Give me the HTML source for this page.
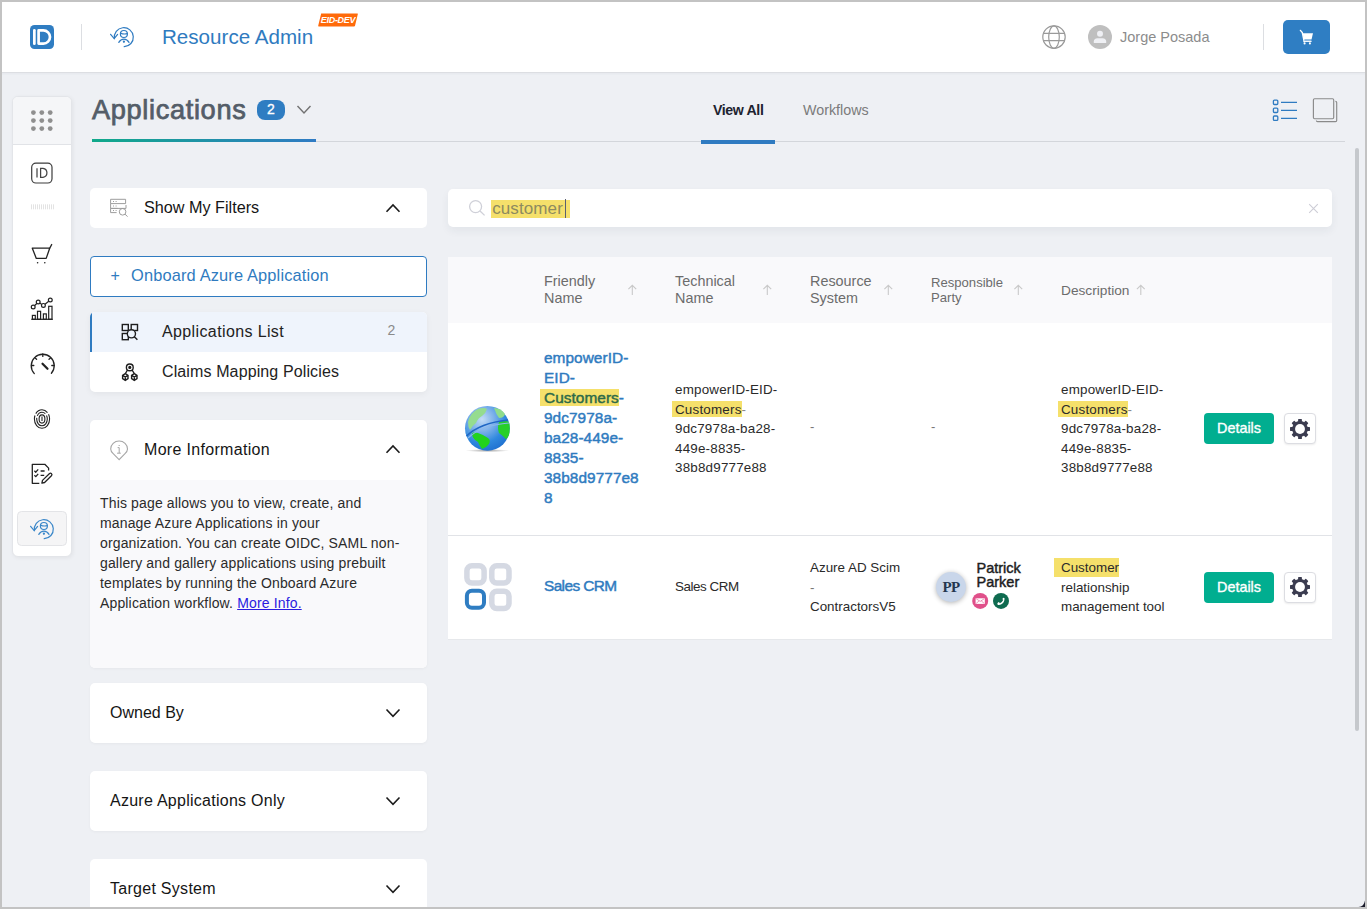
<!DOCTYPE html>
<html><head><meta charset="utf-8">
<style>
*{box-sizing:border-box;margin:0;padding:0}
html,body{width:1367px;height:909px;overflow:hidden;background:#eef0f4}
body{font-family:"Liberation Sans",sans-serif;position:relative}
.a{position:absolute}
svg.a{overflow:visible}
.card{position:absolute;background:#fff;border-radius:5px}
.t{position:absolute;white-space:nowrap}
.ln{position:absolute;white-space:nowrap}
.hl{background:#f5de6a}
</style></head>
<body>
<!-- ============ HEADER ============ -->
<div class="a" style="left:0;top:0;width:1367px;height:73px;background:#fff;border-bottom:1px solid #dcdee2;box-shadow:0 1px 2px rgba(60,70,90,.05)"></div>
<svg class="a" style="left:30px;top:25px" width="24" height="24" viewBox="0 0 24 24">
  <rect x="0" y="0" width="24" height="24" rx="4.5" fill="#2f7dc2"/>
  <rect x="3" y="4" width="2.7" height="16" rx="1.35" fill="#fff"/>
  <path d="M8.6 5.4 H13.4 A6.3 6.3 0 0 1 13.4 18.6 H8.6 Z" fill="none" stroke="#fff" stroke-width="2.7" stroke-linejoin="round"/>
</svg>
<div class="a" style="left:81px;top:24px;width:1px;height:26px;background:#dcdee2"></div>
<svg class="a" style="left:105px;top:20px" width="35" height="35" viewBox="0 0 35 35" fill="none" stroke="#2f7bc1" stroke-width="1.2" stroke-linecap="round">
  <path d="M19.2 26.7 A9.5 9.5 0 1 0 9.4 18.6"/>
  <path d="M5.6 14.3 L9.2 18.6 L12.6 14.4"/>
  <circle cx="18.9" cy="14" r="3.5"/>
  <path d="M15.6 13.2 Q19 14.6 22.3 13.6"/>
  <path d="M13.8 22.4 Q15.6 19.2 18.9 19.2 Q22.2 19.2 24 22.4"/>
  <circle cx="18.9" cy="21.7" r="0.5" fill="#2f7bc1"/>
</svg>
<div class="t" style="left:162px;top:25px;font-size:20.6px;line-height:24px;color:#2f7bbf">Resource Admin</div>
<svg class="a" style="left:318px;top:12.7px" width="40" height="14" viewBox="0 0 40 14">
  <path d="M3 0.5 H39.5 Q40 0.5 39.8 1.2 L37 12.8 Q36.8 13.5 36 13.5 H0.8 Q0 13.5 0.2 12.8 L3 1.2 Q3.2 0.5 3 0.5Z" fill="#ff6a0a"/>
  <text x="20" y="10.2" text-anchor="middle" font-family="Liberation Sans" font-size="9" font-weight="bold" font-style="italic" fill="#fff" letter-spacing="-0.3">EID-DEV</text>
</svg>

<svg class="a" style="left:1036px;top:18px" width="36" height="38" viewBox="0 0 36 38" fill="none" stroke="#9a9a9a" stroke-width="1.2">
  <circle cx="18" cy="19.1" r="11.2"/>
  <ellipse cx="18" cy="19.1" rx="5.3" ry="11.2"/>
  <path d="M7.4 15.4 H28.6 M7.4 22.6 H28.6"/>
</svg>
<svg class="a" style="left:1088px;top:25px" width="24" height="24" viewBox="0 0 24 24">
  <circle cx="12" cy="12" r="12" fill="#bfbfbf"/>
  <circle cx="12" cy="8.7" r="3" fill="#eff0f4"/>
  <path d="M5.8 17.9 V16.6 Q5.8 13.5 9.5 13.3 H14.5 Q18.2 13.5 18.2 16.6 V17.9Z" fill="#eff0f4"/>
</svg>
<div class="t" style="left:1120px;top:28px;font-size:14.5px;line-height:18px;color:#8c8c8c">Jorge Posada</div>
<div class="a" style="left:1263px;top:24px;width:1px;height:26px;background:#dcdee2"></div>
<div class="a" style="left:1283px;top:20px;width:47px;height:34px;background:#2f7ec3;border-radius:5px"></div>
<svg class="a" style="left:1280px;top:16px" width="56" height="42" viewBox="0 0 56 42">
  <path d="M20.4 14.4 L22.3 16.6 L24.2 25.6" fill="none" stroke="#fff" stroke-width="1.4" stroke-linecap="round"/>
  <path d="M22.6 17.2 H33 L31.5 23.6 H23.9Z" fill="#fff"/>
  <path d="M24 24.4 H31.3" stroke="#9cc2e6" stroke-width="0.8"/>
  <path d="M23.6 25.4 H31.6" stroke="#fff" stroke-width="1.1"/>
  <circle cx="24.6" cy="27.4" r="1.05" fill="#fff"/>
  <circle cx="29.9" cy="27.4" r="1.05" fill="#fff"/>
</svg>

<!-- ============ SIDEBAR ============ -->
<div class="card" style="left:12px;top:96px;width:60px;height:461px;border:1px solid #e3e5e9;border-radius:6px;overflow:hidden;box-shadow:1px 1px 4px rgba(0,0,0,.06)">
  <div class="a" style="left:0;top:0;width:58px;height:48px;background:#f5f6f8;border-bottom:1px solid #e1e3e7"></div>
</div>
<svg class="a" style="left:0;top:0" width="72" height="560" viewBox="0 0 72 560">
  <g fill="#8f8f8f">
    <circle cx="33.4" cy="112.6" r="2.4"/><circle cx="41.8" cy="112.6" r="2.4"/><circle cx="50.2" cy="112.6" r="2.4"/>
    <circle cx="33.4" cy="120.6" r="2.4"/><circle cx="41.8" cy="120.6" r="2.4"/><circle cx="50.2" cy="120.6" r="2.4"/>
    <circle cx="33.4" cy="128.6" r="2.4"/><circle cx="41.8" cy="128.6" r="2.4"/><circle cx="50.2" cy="128.6" r="2.4"/>
  </g>
  <!-- ID outline -->
  <rect x="31.7" y="163.1" width="20.3" height="19.9" rx="4.2" fill="none" stroke="#3c3c3c" stroke-width="1.2"/>
  <path d="M37 168.2 V177.5" stroke="#444" stroke-width="1.25"/>
  <path d="M40.6 168.3 H43 A4.6 4.6 0 0 1 43 177.4 H40.6Z" fill="none" stroke="#444" stroke-width="1.25"/>
  <!-- dashed -->
  <g stroke="#d0d0d0" stroke-width="0.6">
    <path d="M31.5 204.3 V209.3 M33.5 204.3 V209.3 M35.5 204.3 V209.3 M37.5 204.3 V209.3 M39.5 204.3 V209.3 M41.5 204.3 V209.3 M43.5 204.3 V209.3 M45.5 204.3 V209.3 M47.5 204.3 V209.3 M49.5 204.3 V209.3 M51.5 204.3 V209.3 M53.5 204.3 V209.3"/>
  </g>
  <!-- cart -->
  <g fill="none" stroke="#222" stroke-width="1.3" stroke-linejoin="round">
    <path d="M32.3 248.2 H49.7 L46.2 258.4 H36.3 Z"/>
    <path d="M49.7 248.2 L51.9 244.1"/>
  </g>
  <circle cx="37.6" cy="262.8" r="0.8" fill="#222"/><circle cx="44.8" cy="262.8" r="0.8" fill="#222"/>
  <!-- chart -->
  <g fill="none" stroke="#222" stroke-width="1.2">
    <path d="M31.3 319.3 H52.7"/>
    <rect x="32.4" y="315.4" width="2.9" height="3.9"/>
    <rect x="37.5" y="311.3" width="3.1" height="8"/>
    <rect x="43.4" y="313.9" width="2.9" height="5.4"/>
    <rect x="48.7" y="306.3" width="3.3" height="13"/>
    <path d="M33.2 307 L38.2 302 L43.4 305.4 L50.3 300"/>
  </g>
  <g fill="#fff" stroke="#222" stroke-width="1.2">
    <circle cx="33.2" cy="307" r="1.9"/><circle cx="38.2" cy="302" r="1.9"/><circle cx="43.4" cy="305.4" r="1.9"/><circle cx="50.3" cy="300" r="1.9"/>
  </g>
  <!-- gauge -->
  <g fill="none" stroke="#222" stroke-width="1.3" stroke-linecap="round">
    <path d="M34.3 373.6 A11.5 11.5 0 1 1 51.4 373.3"/>
    <path d="M42.8 354 V356.4 M31.5 365.5 H33.8 M51.8 365.5 H54.2 M35.1 357.9 L36.6 359.2 M50.5 357.9 L49 359.2"/>
  </g>
  <path d="M42.5 363.7 L47.5 368.8" stroke="#222" stroke-width="2.2" stroke-linecap="round"/>
  <!-- fingerprint -->
  <g fill="none" stroke="#222" stroke-width="1.1">
    <ellipse cx="42" cy="419" rx="7.6" ry="9.3" stroke-dasharray="30 2 14 2"/>
    <ellipse cx="42" cy="419" rx="5.3" ry="6.8" stroke-dasharray="20 2 10 2"/>
    <ellipse cx="42" cy="419" rx="2.9" ry="4.1"/>
    <path d="M42 416.5 V421"/>
  </g>
  <!-- doc -->
  <g fill="none" stroke="#222" stroke-width="1.3" stroke-linejoin="round">
    <path d="M39.3 483.3 H32.3 V464.3 H44.8 L48.6 468.1 V470.6"/>
    <path d="M34.4 470.8 L35.8 472.2 L38.2 469.4 M34.4 475.2 L35.8 476.6 L38.2 473.8"/>
    <path d="M40.6 471 H44.6 M40.6 475.4 H44.2"/>
    <path d="M41.9 483.1 L42.5 480.4 L49.3 473.7 Q50.5 472.6 51.5 473.6 Q52.5 474.6 51.4 475.8 L44.6 482.5Z"/>
  </g>
  <!-- active -->
  <rect x="17.5" y="511.5" width="49" height="34" rx="4" fill="#f5f5f6" stroke="#e3e4e7" stroke-width="1"/>
</svg>
<svg class="a" style="left:24.7px;top:511.5px" width="35" height="35" viewBox="0 0 35 35" fill="none" stroke="#3a87c9" stroke-width="1.2" stroke-linecap="round">
  <path d="M19.2 26.7 A9.5 9.5 0 1 0 9.4 18.6"/>
  <path d="M5.6 14.3 L9.2 18.6 L12.6 14.4"/>
  <circle cx="18.9" cy="14" r="3.5"/>
  <path d="M15.6 13.2 Q19 14.6 22.3 13.6"/>
  <path d="M13.8 22.4 Q15.6 19.2 18.9 19.2 Q22.2 19.2 24 22.4"/>
  <circle cx="18.9" cy="21.7" r="0.5" fill="#3a87c9"/>
</svg>

<!-- ============ TITLE / TABS ============ -->
<div class="t" style="left:92px;top:93.5px;font-size:27.2px;line-height:32px;color:#545d68;letter-spacing:0.65px;-webkit-text-stroke:0.75px #545d68">Applications</div>
<div class="a" style="left:257px;top:100px;width:28px;height:20px;border-radius:8px;background:#2f7dc2;color:#fff;font-size:14px;text-align:center;line-height:18.6px;-webkit-text-stroke:0.3px #fff">2</div>
<svg class="a" style="left:296px;top:104.3px" width="16" height="12" viewBox="0 0 16 12" fill="none" stroke="#727272" stroke-width="1.4"><path d="M1.5 2 L8 9 L14.5 2"/></svg>
<div class="a" style="left:316px;top:141px;width:1029px;height:1px;background:#d3d6db"></div>
<div class="a" style="left:92px;top:139px;width:224px;height:3px;background:linear-gradient(90deg,#10a98a,#2f7bc4)"></div>
<div class="t" style="left:713px;top:102px;font-size:14.2px;line-height:17px;font-weight:bold;color:#1d2330;letter-spacing:-0.4px">View All</div>
<div class="t" style="left:803px;top:102px;font-size:14.3px;line-height:17px;color:#7b7b7b">Workflows</div>
<div class="a" style="left:701px;top:140px;width:74px;height:4px;background:#2f7bc1"></div>
<svg class="a" style="left:1260px;top:90px" width="90" height="40" viewBox="0 0 90 40" fill="none">
  <g stroke="#2f7bc1" stroke-width="1.3">
    <rect x="13.4" y="10.1" width="4.4" height="4.4" rx="1"/>
    <rect x="13.4" y="18.1" width="4.4" height="4.4" rx="1"/>
    <rect x="13.4" y="26" width="4.4" height="4.4" rx="1"/>
    <path d="M21 12.4 H37 M21 20.4 H37 M21 28.3 H37"/>
  </g>
  <g stroke="#8a8a8a" stroke-width="1.15">
    <rect x="53.4" y="8.7" width="20.3" height="20" rx="1.2"/>
    <path d="M75.4 11.3 Q76.7 11.3 76.7 12.5 V30.5 Q76.7 31.6 75.5 31.6 H57.6 Q56.4 31.6 56.4 30.4"/>
  </g>
</svg>
<div class="a" style="left:1355px;top:148px;width:4px;height:583px;background:#c5c8cc;border-radius:2px"></div>

<!-- ============ LEFT COLUMN ============ -->
<div class="card" style="left:90px;top:188px;width:337px;height:40px"></div>
<svg class="a" style="left:104px;top:192px" width="30" height="30" viewBox="0 0 30 30" fill="none" stroke="#9d9d9d" stroke-width="1">
  <path d="M6.6 7.3 H21.6 V11.6 H6.6Z"/>
  <path d="M6.6 11.6 V16.4 H22 V13"/>
  <path d="M13.6 16.4 H6.6 V20.6 H12.6"/>
  <circle cx="18.6" cy="19.8" r="3.3"/>
  <path d="M21 22.2 L23.6 24.6"/>
  <g stroke-width="1.1"><path d="M9 9.5 h1 M11.6 9.5 h1 M9 14 h1 M11.6 14 h1 M9 18.5 h1 M11.6 18.5 h1"/></g>
</svg>
<div class="t" style="left:144px;top:198px;font-size:16.2px;line-height:18px;color:#151515">Show My Filters</div>
<svg class="a" style="left:384px;top:201px" width="18" height="14" viewBox="0 0 18 14" fill="none" stroke="#1b1b1b" stroke-width="1.6"><path d="M2.5 10.8 L9 4 L15.5 10.8"/></svg>

<div class="a" style="left:90px;top:256px;width:337px;height:41px;border:1.5px solid #2f7bc1;border-radius:4px;background:#fff"></div>
<div class="t" style="left:110.5px;top:267px;font-size:16px;line-height:18px;color:#2f7bbf">+</div>
<div class="t" style="left:131px;top:266.4px;font-size:16.4px;line-height:18px;color:#2f7bbf;letter-spacing:0.15px">Onboard Azure Application</div>

<div class="card" style="left:90px;top:312px;width:337px;height:80px;overflow:hidden;box-shadow:0 2px 6px rgba(0,0,0,.05)">
  <div class="a" style="left:0;top:0;width:337px;height:40px;background:#eff4fc;border-left:2px solid #2f7bc1"></div>
</div>
<svg class="a" style="left:116px;top:318px" width="28" height="68" viewBox="0 0 28 68" fill="none" stroke="#1e1e1e" stroke-width="1.4">
  <rect x="6.3" y="6.5" width="6" height="6"/>
  <rect x="15.2" y="6.5" width="6.3" height="6"/>
  <rect x="6.3" y="15.5" width="6" height="6.2"/>
  <circle cx="15.4" cy="15.8" r="4.1" fill="#eef4fc"/>
  <path d="M18.3 18.7 L21.4 21.8"/>
  <circle cx="13.8" cy="49.4" r="3.4"/>
  <circle cx="13.8" cy="49.4" r="0.9" fill="#1e1e1e"/>
  <path d="M11.5 52 L9.4 55.5 M16.1 52 L18.2 55.5"/>
  <path d="M6.6 57.3 L9.3 55.6 L12 57.3 V60.6 L9.3 62.3 L6.6 60.6Z M6.6 57.3 L9.3 59 L12 57.3 M9.3 59 V62.3"/>
  <path d="M15.6 57.3 L18.3 55.6 L21 57.3 V60.6 L18.3 62.3 L15.6 60.6Z M15.6 57.3 L18.3 59 L21 57.3 M18.3 59 V62.3"/>
</svg>
<div class="t" style="left:162px;top:323px;font-size:16px;line-height:18px;color:#222;letter-spacing:0.38px">Applications List</div>
<div class="t" style="left:387.5px;top:321px;font-size:14px;line-height:18px;color:#8a8a8a">2</div>
<div class="t" style="left:162px;top:363px;font-size:16px;line-height:18px;color:#222;letter-spacing:0.12px">Claims Mapping Policies</div>

<div class="card" style="left:90px;top:420px;width:337px;height:248px;overflow:hidden;box-shadow:0 1px 3px rgba(0,0,0,.04)">
  <div class="a" style="left:0;top:60px;width:337px;height:188px;background:#f9f9fb"></div>
</div>
<svg class="a" style="left:104px;top:436px" width="28" height="30" viewBox="0 0 28 30" fill="none" stroke="#a6a6a6" stroke-width="1.1">
  <path d="M15.1 23.6 L9.2 17.6 Q6.7 15.2 6.7 12.9 A8.4 7.9 0 0 1 23.5 12.9 Q23.5 15.2 21 17.6 Z"/>
  <path d="M14.6 9.5 H15.8" stroke-width="0.9"/>
  <path d="M13.6 11.6 H15.2 V17 M13.1 17.2 H16.8" stroke-width="1"/>
</svg>
<div class="t" style="left:144px;top:441px;font-size:16px;line-height:18px;color:#151515;letter-spacing:0.32px">More Information</div>
<svg class="a" style="left:384px;top:442px" width="18" height="14" viewBox="0 0 18 14" fill="none" stroke="#1b1b1b" stroke-width="1.6"><path d="M2.5 10.8 L9 4 L15.5 10.8"/></svg>
<div class="a" style="left:100px;top:493px;width:320px;font-size:14px;line-height:20px;color:#2b2b2b;letter-spacing:0.15px">
  <div class="ln" style="top:0">This page allows you to view, create, and</div>
  <div class="ln" style="top:20px">manage Azure Applications in your</div>
  <div class="ln" style="top:40px">organization. You can create OIDC, SAML non-</div>
  <div class="ln" style="top:60px">gallery and gallery applications using prebuilt</div>
  <div class="ln" style="top:80px">templates by running the Onboard Azure</div>
  <div class="ln" style="top:100px">Application workflow. <span style="color:#2a1be0;text-decoration:underline">More Info.</span></div>
</div>

<div class="card" style="left:90px;top:683px;width:337px;height:60px;box-shadow:0 1px 3px rgba(0,0,0,.04)"></div>
<div class="t" style="left:110px;top:704px;font-size:16px;line-height:18px;color:#151515">Owned By</div>
<svg class="a" style="left:384px;top:706px" width="18" height="14" viewBox="0 0 18 14" fill="none" stroke="#1b1b1b" stroke-width="1.6"><path d="M2.5 3.5 L9 10.3 L15.5 3.5"/></svg>
<div class="card" style="left:90px;top:771px;width:337px;height:60px;box-shadow:0 1px 3px rgba(0,0,0,.04)"></div>
<div class="t" style="left:110px;top:792px;font-size:16px;line-height:18px;color:#151515;letter-spacing:0.26px">Azure Applications Only</div>
<svg class="a" style="left:384px;top:794px" width="18" height="14" viewBox="0 0 18 14" fill="none" stroke="#1b1b1b" stroke-width="1.6"><path d="M2.5 3.5 L9 10.3 L15.5 3.5"/></svg>
<div class="card" style="left:90px;top:859px;width:337px;height:60px"></div>
<div class="t" style="left:110px;top:880px;font-size:16px;line-height:18px;color:#151515;letter-spacing:0.28px">Target System</div>
<svg class="a" style="left:384px;top:882px" width="18" height="14" viewBox="0 0 18 14" fill="none" stroke="#1b1b1b" stroke-width="1.6"><path d="M2.5 3.5 L9 10.3 L15.5 3.5"/></svg>

<!-- ============ SEARCH ============ -->
<div class="card" style="left:448px;top:189px;width:884px;height:38px;border-radius:5px;box-shadow:0 4px 8px rgba(40,50,70,.06)"></div>
<svg class="a" style="left:466px;top:197px" width="22" height="22" viewBox="0 0 22 22" fill="none" stroke="#cfd0d8" stroke-width="1.3"><circle cx="9.6" cy="9.6" r="6"/><path d="M14 14 L18.6 18.4"/></svg>
<div class="a" style="left:491px;top:200px;width:79px;height:18px;background:#f5e06b"></div>
<div class="t" style="left:492.2px;top:198.6px;font-size:17px;line-height:20px;color:#8d8b60;letter-spacing:0.1px">customer</div>
<div class="a" style="left:564.5px;top:199px;width:1px;height:19px;background:#5a6070"></div>
<svg class="a" style="left:1306px;top:201px" width="16" height="16" viewBox="0 0 16 16" stroke="#cdcdd6" stroke-width="1.1"><path d="M3.2 3.2 L11.8 11.8 M11.8 3.2 L3.2 11.8"/></svg>

<!-- ============ TABLE ============ -->
<div class="a" style="left:448px;top:257px;width:884px;height:66px;background:#f9f9fb"></div>
<div class="a" style="left:448px;top:323px;width:884px;height:212px;background:#fff"></div>
<div class="a" style="left:448px;top:535px;width:884px;height:1px;background:#e1e3e7"></div>
<div class="a" style="left:448px;top:536px;width:884px;height:103px;background:#fff;box-shadow:0 1px 0 #e6e8eb"></div>

<div class="a" style="color:#6c6c6c;font-size:14.4px;line-height:17px;top:1px">
  <div class="t" style="left:544px;top:272px">Friendly</div>
  <div class="t" style="left:544px;top:289px">Name</div>
  <div class="t" style="left:675px;top:272px">Technical</div>
  <div class="t" style="left:675px;top:289px">Name</div>
  <div class="t" style="left:810px;top:272px">Resource</div>
  <div class="t" style="left:810px;top:289px">System</div>
  <div class="t" style="left:931px;top:274px;font-size:13.1px;line-height:15px">Responsible</div>
  <div class="t" style="left:931px;top:289px;font-size:13.1px;line-height:15px">Party</div>
  <div class="t" style="left:1061px;top:281px;font-size:13.7px">Description</div>
</div>
<svg class="a" style="left:0;top:0" width="1200" height="300" viewBox="0 0 1200 300" fill="none" stroke="#c9c9c9" stroke-width="1.1">
  <path d="M632.3 295 V285.5 M628.4 289.2 L632.3 285.3 L636.2 289.2"/>
  <path d="M767.3 295 V285.5 M763.4 289.2 L767.3 285.3 L771.2 289.2"/>
  <path d="M888.3 295 V285.5 M884.4 289.2 L888.3 285.3 L892.2 289.2"/>
  <path d="M1018.3 295 V285.5 M1014.4 289.2 L1018.3 285.3 L1022.2 289.2"/>
  <path d="M1140.8 295 V285.5 M1136.9 289.2 L1140.8 285.3 L1144.7 289.2"/>
</svg>

<!-- row 1 -->
<svg class="a" style="left:458px;top:398px" width="60" height="60" viewBox="0 0 60 60">
  <defs>
    <radialGradient id="gb" cx="0.38" cy="0.3" r="0.75">
      <stop offset="0" stop-color="#c4dcf6"/><stop offset="0.35" stop-color="#7fb2ea"/><stop offset="0.7" stop-color="#2f88de"/><stop offset="1" stop-color="#1f70d0"/>
    </radialGradient>
    <radialGradient id="gs" cx="0.5" cy="0.5" r="0.5"><stop offset="0" stop-color="#000" stop-opacity=".35"/><stop offset="1" stop-color="#000" stop-opacity="0"/></radialGradient>
  </defs>
  <ellipse cx="29.4" cy="52.6" rx="22" ry="1.6" fill="url(#gs)"/>
  <circle cx="29.4" cy="30.3" r="22.4" fill="url(#gb)"/>
  <path d="M14 35 Q16 34 20 35 Q26 37 30 40 Q33 42 31 46 Q28 50 24 51 Q21 47 20 44 Q14 41 14 35Z" fill="#22d21e"/>
  <path d="M41 24 Q47 22 51 24 Q52.5 30 51 37 Q48 43 47 40 Q44 37 41 35 Q39 30 41 24Z" fill="#27cf2a"/>
  <path d="M10 24 Q12 15 20 11 Q26 9 29 11 Q28 15 24 18 Q20 20 18 25 Q14 28 12 32 Q10 29 10 24Z" fill="#95dc8f"/>
  <path d="M36 10 Q43 10 47 16 Q46 20 41 20 Q38 16 36 10Z" fill="#8fdc8c"/>
  <path d="M8.5 38 Q22 25 50 22" fill="none" stroke="#1f66c4" stroke-width="1.6"/>
  <path d="M10 40 Q24 27 51 25" fill="none" stroke="#8ab7ec" stroke-width="1.2"/>
</svg>
<div class="a" style="left:544px;top:347.6px;font-size:15.4px;line-height:20px;color:#2f7bbf;-webkit-text-stroke:0.45px #2f7bbf;letter-spacing:0.05px">
  <div class="ln" style="top:0">empowerID-</div>
  <div class="ln" style="top:20px">EID-</div>
  <div class="ln" style="top:40px"><span style="background:#f5e06b;color:#2d6a49;-webkit-text-stroke:0.45px #2d6a49;padding:0 0 0 4px;margin-left:-4px">Customers</span>-</div>
  <div class="ln" style="top:60px">9dc7978a-</div>
  <div class="ln" style="top:80px">ba28-449e-</div>
  <div class="ln" style="top:100px">8835-</div>
  <div class="ln" style="top:120px">38b8d9777e8</div>
  <div class="ln" style="top:140px">8</div>
</div>
<div class="a" style="left:675px;top:380px;font-size:13.4px;line-height:19.6px;color:#2a2a2a;letter-spacing:0.2px">
  <div class="ln" style="top:0">empowerID-EID-</div>
  <div class="ln" style="top:19.6px"><span style="background:#f5e06b;padding:1px 0 0 3px;margin-left:-3px">Customers</span><span style="color:#888">-</span></div>
  <div class="ln" style="top:39.2px">9dc7978a-ba28-</div>
  <div class="ln" style="top:58.8px">449e-8835-</div>
  <div class="ln" style="top:78.4px">38b8d9777e88</div>
</div>
<div class="t" style="left:810px;top:418px;font-size:13px;line-height:18px;color:#777">-</div>
<div class="t" style="left:931px;top:418px;font-size:13px;line-height:18px;color:#777">-</div>
<div class="a" style="left:1061px;top:380px;font-size:13.4px;line-height:19.6px;color:#2a2a2a;letter-spacing:0.2px">
  <div class="ln" style="top:0">empowerID-EID-</div>
  <div class="ln" style="top:19.6px"><span style="background:#f5e06b;padding:1px 0 0 3px;margin-left:-3px">Customers</span><span style="color:#888">-</span></div>
  <div class="ln" style="top:39.2px">9dc7978a-ba28-</div>
  <div class="ln" style="top:58.8px">449e-8835-</div>
  <div class="ln" style="top:78.4px">38b8d9777e88</div>
</div>
<div class="a" style="left:1204px;top:413px;width:70px;height:31px;background:#01ae90;border-radius:4px;color:#fff;font-size:14.4px;line-height:31px;text-align:center;-webkit-text-stroke:0.35px #fff">Details</div>
<div class="a" style="left:1284px;top:413px;width:32px;height:31px;background:#fff;border:1px solid #dcdde2;border-radius:4px;box-shadow:0 1px 2px rgba(0,0,0,.08)"></div>

<!-- row 2 -->
<svg class="a" style="left:458px;top:556px" width="60" height="60" viewBox="0 0 60 60" fill="none">
  <rect x="8.9" y="9.7" width="17.2" height="17.2" rx="5" stroke="#d5d9e3" stroke-width="5.5"/>
  <rect x="33.8" y="9.7" width="17.2" height="17.2" rx="5" stroke="#d5d9e3" stroke-width="5.5"/>
  <rect x="33.8" y="35.2" width="17.2" height="17.2" rx="5" stroke="#d5d9e3" stroke-width="5.5"/>
  <rect x="8.9" y="34.7" width="17.1" height="17.1" rx="5" stroke="#2f7dc2" stroke-width="4"/>
</svg>
<div class="t" style="left:544px;top:577px;font-size:15.4px;line-height:18px;color:#2f7bbf;letter-spacing:-0.6px;-webkit-text-stroke:0.45px #2f7bbf">Sales CRM</div>
<div class="t" style="left:675px;top:578px;font-size:13.4px;line-height:18px;color:#2a2a2a;letter-spacing:-0.45px">Sales CRM</div>
<div class="a" style="left:810px;top:558px;font-size:13.4px;line-height:19.6px;color:#2a2a2a">
  <div class="ln" style="top:0">Azure AD Scim</div>
  <div class="ln" style="top:19.6px;color:#777">-</div>
  <div class="ln" style="top:39.2px">ContractorsV5</div>
</div>
<div class="a" style="left:936px;top:572px;width:30px;height:30px;border-radius:50%;background:#c9d6ea;box-shadow:0 1px 5px rgba(0,0,0,.3);color:#24364f;font-family:'Liberation Serif',serif;font-weight:bold;font-size:15px;line-height:31px;text-align:center;letter-spacing:-0.6px">PP</div>
<div class="a" style="left:976.5px;top:560.5px;font-size:14.5px;line-height:14.5px;color:#1d1d1d;-webkit-text-stroke:0.45px #1d1d1d">
  <div class="ln" style="top:0">Patrick</div>
  <div class="ln" style="top:14.5px">Parker</div>
</div>
<svg class="a" style="left:970px;top:591px" width="42" height="20" viewBox="0 0 42 20">
  <circle cx="10.2" cy="9.9" r="8" fill="#e0508a"/>
  <rect x="5.6" y="7.3" width="9.2" height="5.6" fill="#fff"/>
  <path d="M6.2 7.8 L10.2 10.4 L14.2 7.8 M6.2 12.4 L9.2 9.8 M14.2 12.4 L11.2 9.8" fill="none" stroke="#e0508a" stroke-width="0.6"/>
  <circle cx="31" cy="9.9" r="8" fill="#0f6b50"/>
  <path d="M27.5 13.5 Q26.9 12.4 28 11.6 L28.9 11.1 L29.9 12.2 Q32 11.4 33.2 9 L32.3 7.9 L33.1 6.9 Q34.1 6.5 34.6 7.4 Q34.4 11.6 31 13.6 Q28.6 14.6 27.5 13.5Z" fill="#fff" transform="rotate(0)"/>
</svg>
<div class="a" style="left:1061px;top:558px;font-size:13.4px;line-height:19.6px;color:#2a2a2a">
  <div class="ln" style="top:0"><span style="background:#f5e06b;padding:2px 0 2px 7px;margin-left:-7px">Customer</span></div>
  <div class="ln" style="top:19.6px">relationship</div>
  <div class="ln" style="top:39.2px">management tool</div>
</div>
<div class="a" style="left:1204px;top:572px;width:70px;height:31px;background:#01ae90;border-radius:4px;color:#fff;font-size:14.4px;line-height:31px;text-align:center;-webkit-text-stroke:0.35px #fff">Details</div>
<div class="a" style="left:1284px;top:572px;width:32px;height:31px;background:#fff;border:1px solid #dcdde2;border-radius:4px;box-shadow:0 1px 2px rgba(0,0,0,.08)"></div>

<!-- gears -->
<svg class="a" style="left:1290px;top:419.2px" width="20" height="20" viewBox="0 0 20 20">
  <g fill="#3b3c50"><rect x="8.1" y="0" width="3.8" height="5" rx="0.6" transform="rotate(0 10 10)"/><rect x="8.1" y="0" width="3.8" height="5" rx="0.6" transform="rotate(45 10 10)"/><rect x="8.1" y="0" width="3.8" height="5" rx="0.6" transform="rotate(90 10 10)"/><rect x="8.1" y="0" width="3.8" height="5" rx="0.6" transform="rotate(135 10 10)"/><rect x="8.1" y="0" width="3.8" height="5" rx="0.6" transform="rotate(180 10 10)"/><rect x="8.1" y="0" width="3.8" height="5" rx="0.6" transform="rotate(225 10 10)"/><rect x="8.1" y="0" width="3.8" height="5" rx="0.6" transform="rotate(270 10 10)"/><rect x="8.1" y="0" width="3.8" height="5" rx="0.6" transform="rotate(315 10 10)"/><circle cx="10" cy="10" r="7.9"/></g><circle cx="10" cy="10" r="4.95" fill="#fff"/>
</svg>
<svg class="a" style="left:1290px;top:577.2px" width="20" height="20" viewBox="0 0 20 20">
  <g fill="#3b3c50"><rect x="8.1" y="0" width="3.8" height="5" rx="0.6" transform="rotate(0 10 10)"/><rect x="8.1" y="0" width="3.8" height="5" rx="0.6" transform="rotate(45 10 10)"/><rect x="8.1" y="0" width="3.8" height="5" rx="0.6" transform="rotate(90 10 10)"/><rect x="8.1" y="0" width="3.8" height="5" rx="0.6" transform="rotate(135 10 10)"/><rect x="8.1" y="0" width="3.8" height="5" rx="0.6" transform="rotate(180 10 10)"/><rect x="8.1" y="0" width="3.8" height="5" rx="0.6" transform="rotate(225 10 10)"/><rect x="8.1" y="0" width="3.8" height="5" rx="0.6" transform="rotate(270 10 10)"/><rect x="8.1" y="0" width="3.8" height="5" rx="0.6" transform="rotate(315 10 10)"/><circle cx="10" cy="10" r="7.9"/></g><circle cx="10" cy="10" r="4.95" fill="#fff"/>
</svg>
<!-- corner -->
<svg class="a" style="left:1357px;top:899px" width="9" height="9" viewBox="0 0 9 9"><path d="M8 1.5 V8 H1.5 Q7 7.5 8 1.5Z" fill="#1a1a2a"/></svg>


<div class="a" style="left:0;top:0;width:1367px;height:909px;border:2px solid #c3c3c3;pointer-events:none"></div>
</body></html>
